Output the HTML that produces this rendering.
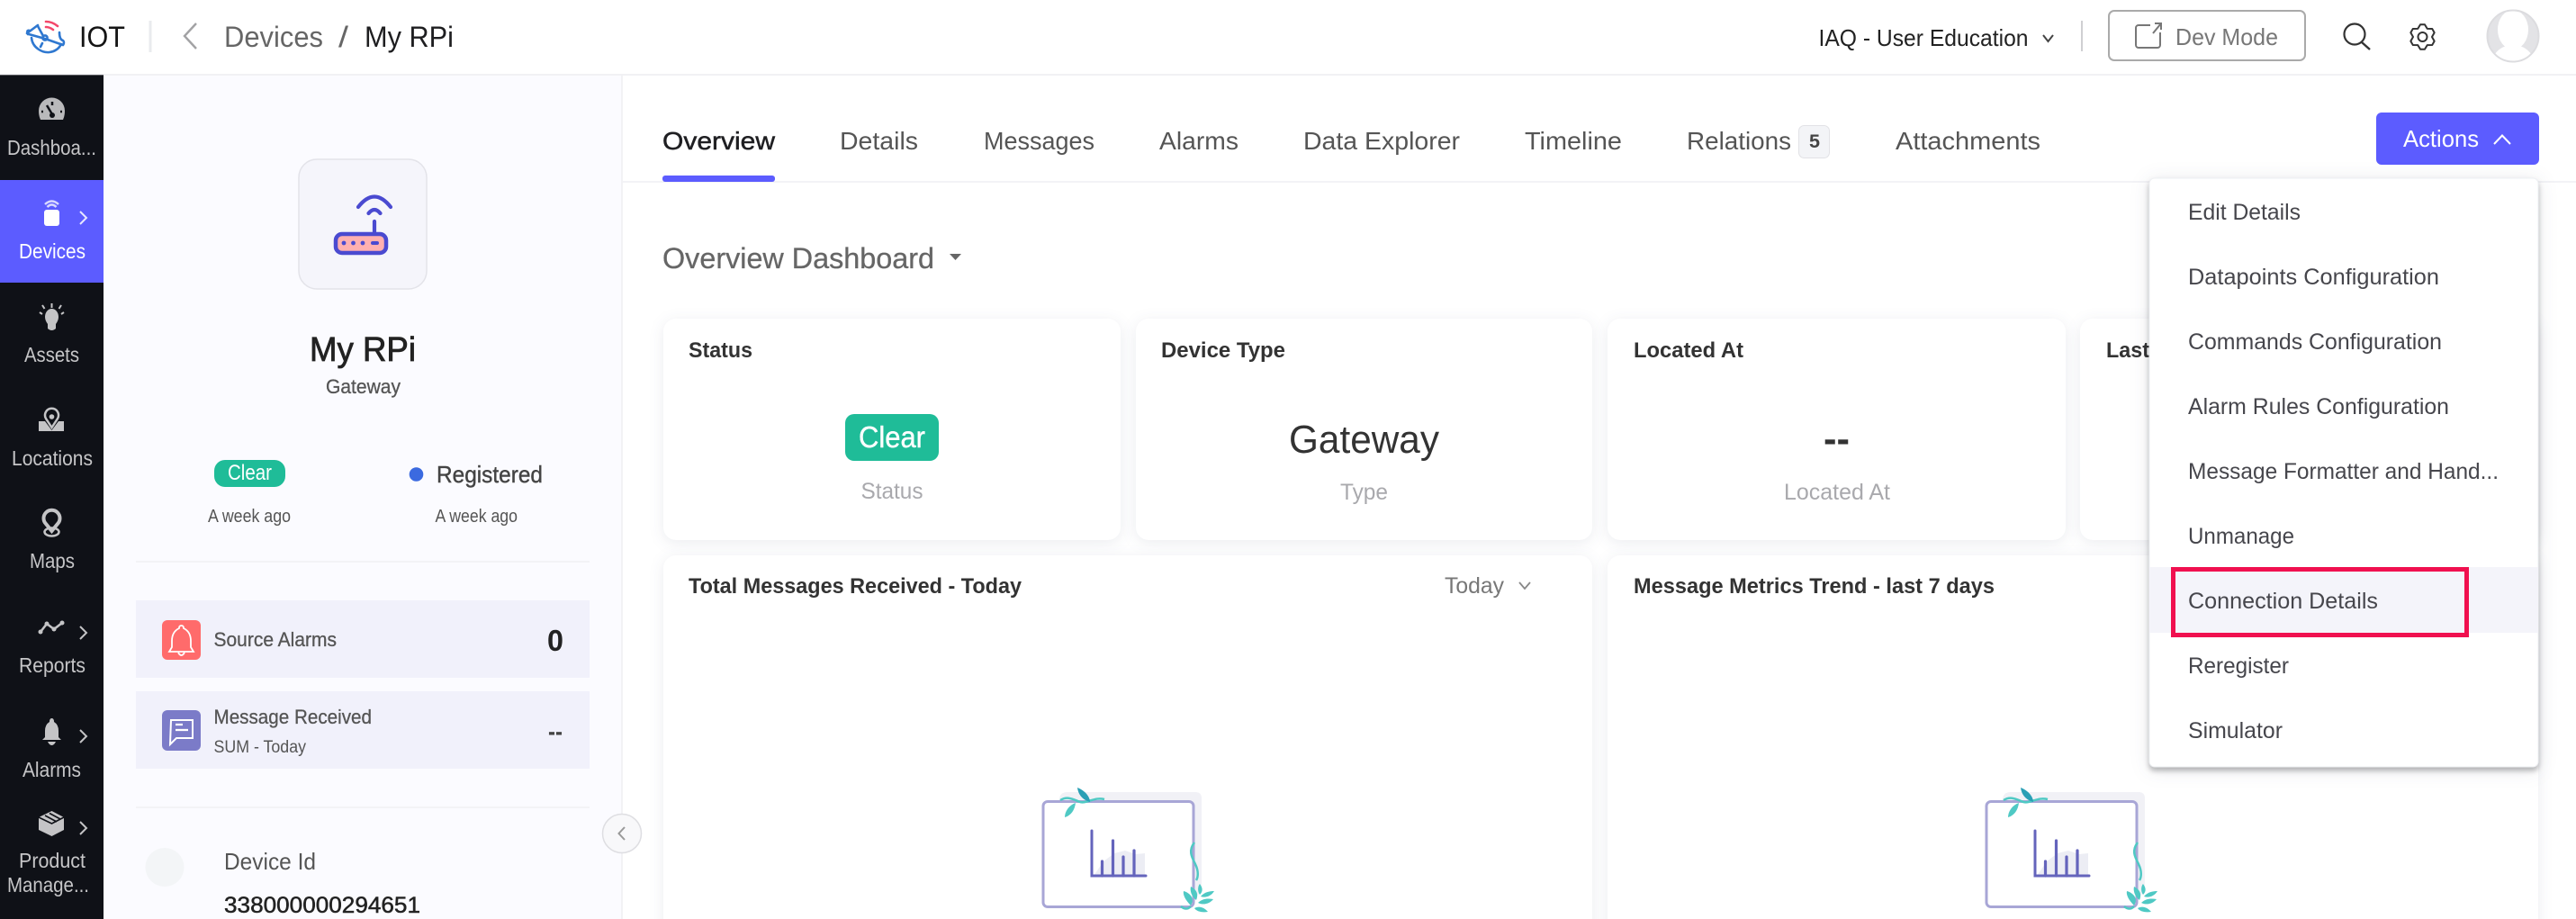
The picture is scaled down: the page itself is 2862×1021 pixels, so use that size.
<!DOCTYPE html>
<html lang="en">
<head>
<meta charset="utf-8">
<title>My RPi - Devices - IOT</title>
<style>
html,body{margin:0;padding:0;background:#fff;width:2862px;height:1021px;overflow:hidden}
svg{display:block}
text{font-family:"Liberation Sans",sans-serif;white-space:pre}
.side{font-size:23px;fill:#c6c6c8}
.tab{font-size:28px;fill:#555}
.menu{font-size:25px;fill:#46464c}
.title{font-size:24px;font-weight:700;fill:#333}
.sub{font-size:25px;fill:#a9a9ad}
.card{fill:#fff;filter:drop-shadow(0 3px 8px rgba(30,45,90,.09))}
</style>
</head>
<body>
<svg width="2862" height="1021" viewBox="0 0 2862 1021" xmlns="http://www.w3.org/2000/svg">
<rect width="2862" height="1021" fill="#fff"/>

<!-- top bar -->
<rect x="0" y="82" width="2862" height="2" fill="#f1f1f4"/>
<g fill="none" stroke="#2f78d0" stroke-width="2.6" stroke-linecap="round" stroke-linejoin="round">
<path d="M30 37 L42 28 M31 38 Q29 33 33 34"/>
<path d="M32 38 L50 43 L70 50 Q72 47 70 45 Q66 44 66 36"/>
<path d="M35 42 C36 53 47 59 55 58 C62 57 66 53 68 49"/>
<path d="M42 29 L48 40 M47 48 L45 52"/>
<circle cx="50" cy="42" r="2.6"/>
</g>
<path d="M51 24 Q58 24 64 29 M51 30 Q55 30 59 33" fill="none" stroke="#f3476a" stroke-width="2.6" stroke-linecap="round"/>
<text x="88" y="52" font-size="32" fill="#151515" textLength="51" lengthAdjust="spacingAndGlyphs">IOT</text>
<rect x="165.500" y="23" width="3" height="35" fill="#e9ebee"/>
<path d="M218 26 L205 40 L218 54" fill="none" stroke="#a2a2a4" stroke-width="2.4"/>
<text x="249" y="52" font-size="32" fill="#666" textLength="110" lengthAdjust="spacingAndGlyphs">Devices</text>
<text x="376" y="52" font-size="32" fill="#666" textLength="11" lengthAdjust="spacingAndGlyphs">/</text>
<text x="405" y="52" font-size="32" fill="#1e1e20" textLength="99" lengthAdjust="spacingAndGlyphs">My RPi</text>

<text x="2020.500" y="51" font-size="26" fill="#222" textLength="233" lengthAdjust="spacingAndGlyphs">IAQ - User Education</text>
<path d="M2270 39 L2275.500 46 L2281 39" fill="none" stroke="#444" stroke-width="2"/>
<rect x="2312" y="23" width="2" height="34" fill="#cfcfd2"/>
<rect x="2343" y="12" width="218" height="55" rx="6" fill="#fff" stroke="#aaa" stroke-width="2"/>
<path d="M2389 28 H2376 a3 3 0 0 0 -3 3 V50 a3 3 0 0 0 3 3 H2397 a3 3 0 0 0 3 -3 V36 M2392 37 L2401 26 M2394 26 H2401 V33" fill="none" stroke="#777" stroke-width="2"/>
<text x="2417" y="50" font-size="26" fill="#777" textLength="114" lengthAdjust="spacingAndGlyphs">Dev Mode</text>
<circle cx="2616" cy="38" r="11.500" fill="none" stroke="#333" stroke-width="2.200"/>
<path d="M2624 47 L2633 55" stroke="#333" stroke-width="2.400" fill="none"/>
<g transform="translate(2691.500 41)" fill="none" stroke="#333" stroke-width="2" stroke-linejoin="round">
<path d="M-2.430 -13.790 L2.430 -13.790 L5.250 -9.090 L10.720 -9 L13.160 -4.790 L10.500 0 L13.160 4.790 L10.720 9 L5.250 9.090 L2.430 13.790 L-2.430 13.790 L-5.250 9.090 L-10.720 9 L-13.160 4.790 L-10.500 0 L-13.160 -4.790 L-10.720 -9 L-5.250 -9.090 Z"/>
<circle r="5"/>
</g>
<clipPath id="av"><circle cx="2792" cy="40" r="28"/></clipPath>
<circle cx="2792" cy="40" r="28.500" fill="#e3e3e6"/>
<g clip-path="url(#av)" fill="#fff">
<ellipse cx="2792" cy="33" rx="17" ry="22"/>
<ellipse cx="2792" cy="72" rx="24" ry="22"/>
</g>
<circle cx="2792" cy="40" r="28.500" fill="none" stroke="#dcdcdf" stroke-width="2"/>

<!-- sidebar -->
<rect x="0" y="83" width="115" height="938" fill="#0f1117"/>
<rect x="0" y="83" width="115" height="1" fill="#55565a"/>
<rect x="0" y="200" width="115" height="114" fill="#5c5cff"/>

<path d="M45 133 Q43 129 43 123 A14.500 14.500 0 0 1 72 123 Q72 129 70 133 Z" fill="#b9b9bb"/>
<path d="M52 117 L58 127 M58 113 V117 M48 124 H46 M69 124 H67" stroke="#0f1117" stroke-width="2.500" fill="none"/>
<circle cx="58" cy="128" r="3" fill="#0f1117"/>
<text class="side" x="8" y="172" textLength="99" lengthAdjust="spacingAndGlyphs">Dashboa...</text>

<path d="M50 227 Q57.500 220 65 227 M52.500 230 Q57.500 225 62.500 230" fill="none" stroke="#d8d8ff" stroke-width="2.500"/>
<rect x="49" y="233" width="17" height="18" rx="3" fill="#fff"/>
<path d="M89 235 L96 242 L89 249" fill="none" stroke="#fff" stroke-width="2" opacity=".85"/>
<text class="side" style="fill:#fff" x="21" y="287" textLength="74" lengthAdjust="spacingAndGlyphs">Devices</text>

<path d="M50 352 A7.500 9 0 0 1 65 352 Q65 356 62 360 V365 Q57.500 369 53 365 V360 Q50 356 50 352 Z" fill="#c4c4c6"/>
<path d="M57.500 337 V342 M47 339 L49.500 343 M68 339 L65.500 343 M44 347 L47 349 M71 347 L68 349" stroke="#c4c4c6" stroke-width="2" fill="none"/>
<text class="side" x="27" y="402" textLength="61" lengthAdjust="spacingAndGlyphs">Assets</text>

<path d="M43 468 H50 L57.500 478 L65 468 H71 V479 H43 Z" fill="#c4c4c6"/>
<path d="M57.500 475 L51 465 A7.500 7.500 0 1 1 64 465 Z" fill="#0f1117" stroke="#c4c4c6" stroke-width="2.500"/>
<circle cx="57.500" cy="463" r="2.800" fill="#c4c4c6"/>
<text class="side" x="13" y="517" textLength="90" lengthAdjust="spacingAndGlyphs">Locations</text>

<path d="M57.500 590 L51 582 A9 9 0 1 1 64 582 Z" fill="none" stroke="#c4c4c6" stroke-width="4"/>
<ellipse cx="57.500" cy="591" rx="8" ry="4.500" fill="none" stroke="#c4c4c6" stroke-width="2.500"/>
<text class="side" x="33" y="631" textLength="50" lengthAdjust="spacingAndGlyphs">Maps</text>

<path d="M45 702 L52 693 L60 699 L69 692" fill="none" stroke="#c4c4c6" stroke-width="2.600"/>
<g fill="#c4c4c6"><circle cx="45" cy="702" r="2.500"/><circle cx="52" cy="693" r="2.500"/><circle cx="60" cy="699" r="2.500"/><circle cx="69" cy="692" r="2.500"/></g>
<path d="M89 696 L96 703 L89 710" fill="none" stroke="#c4c4c6" stroke-width="2"/>
<text class="side" x="21" y="747" textLength="74" lengthAdjust="spacingAndGlyphs">Reports</text>

<path d="M57.500 798 Q60 798 60 802 Q65 805 65 812 V819 L68 822 H47 L50 819 V812 Q50 805 55 802 Q55 798 57.500 798 Z M53 824 H62 Q60 828 57.500 828 Q55 828 53 824 Z" fill="#c4c4c6"/>
<path d="M89 811 L96 818 L89 825" fill="none" stroke="#c4c4c6" stroke-width="2"/>
<text class="side" x="25" y="863" textLength="65" lengthAdjust="spacingAndGlyphs">Alarms</text>

<path d="M57.500 901 L71 908 V922 L57.500 929 L43 922 V908 Z" fill="#c4c4c6"/>
<path d="M50 906 L63 913 M55 903.500 L67 910 M43 908 L57.500 915 L71 908" fill="none" stroke="#0f1117" stroke-width="1.600"/>
<path d="M89 913 L96 920 L89 927" fill="none" stroke="#c4c4c6" stroke-width="2"/>
<text class="side" x="21" y="964" textLength="74" lengthAdjust="spacingAndGlyphs">Product</text>
<text class="side" x="8" y="991" textLength="91" lengthAdjust="spacingAndGlyphs">Manage...</text>

<!-- left panel -->
<rect x="115" y="84" width="575" height="937" fill="#fbfbff"/>
<rect x="690" y="84" width="2" height="937" fill="#f2f2f5"/>
<rect x="332" y="177" width="142" height="144" rx="20" fill="#f5f5fb" stroke="#e3e3e9" stroke-width="1.500"/>
<path d="M398 230 Q416 207 434 230 M409.500 237 Q416 229 422.500 237 M416 246 V258" fill="none" stroke="#4a4ad0" stroke-width="4.200" stroke-linecap="round"/>
<rect x="373" y="260" width="56" height="21" rx="7" fill="#ffb0b0" stroke="#4a4ad0" stroke-width="4.500"/>
<g fill="#4a4ad0"><circle cx="382" cy="270" r="2.400"/><circle cx="392.500" cy="270" r="2.400"/><circle cx="403" cy="270" r="2.400"/><rect x="412" y="268" width="9" height="4" rx="2"/></g>

<text x="344" y="401" font-size="38" fill="#222" stroke="#222" stroke-width=".8" textLength="118" lengthAdjust="spacingAndGlyphs">My RPi</text>
<text x="362" y="437" font-size="22" fill="#555" stroke="#555" stroke-width=".3" textLength="83" lengthAdjust="spacingAndGlyphs">Gateway</text>
<rect x="238" y="511" width="79" height="30" rx="12" fill="#1fbc98"/>
<text x="253" y="533" font-size="24" fill="#fff" textLength="49" lengthAdjust="spacingAndGlyphs">Clear</text>
<circle cx="462.500" cy="527" r="7.800" fill="#3b6ae0"/>
<text x="485" y="536" font-size="26" fill="#444" stroke="#444" stroke-width=".4" textLength="118" lengthAdjust="spacingAndGlyphs">Registered</text>
<text x="231" y="580" font-size="20" fill="#555" textLength="92" lengthAdjust="spacingAndGlyphs">A week ago</text>
<text x="483.500" y="580" font-size="20" fill="#555" textLength="91.500" lengthAdjust="spacingAndGlyphs">A week ago</text>
<rect x="151" y="623" width="504" height="2" fill="#f3f3f6"/>

<rect x="151" y="667" width="504" height="86" fill="#f1f1fb"/>
<rect x="180" y="689" width="43" height="44" rx="6" fill="#ff6b6b"/>
<path d="M201.500 695 Q204 695 204 698 Q212 702 212 712 V719 L215 724 H188 L191 719 V712 Q191 702 199 698 Q199 695 201.500 695 Z M198 725 Q201.500 731 205 725" fill="none" stroke="#fff" stroke-width="1.800"/>
<text x="237.500" y="718" font-size="22" fill="#555" stroke="#555" stroke-width=".3" textLength="136.500" lengthAdjust="spacingAndGlyphs">Source Alarms</text>
<text x="608" y="723" font-size="33" font-weight="700" fill="#222" textLength="18" lengthAdjust="spacingAndGlyphs">0</text>

<rect x="151" y="768" width="504" height="86" fill="#f1f1fb"/>
<rect x="180" y="789" width="43" height="45" rx="6" fill="#7b7bc8"/>
<path d="M190 800 H214 V820 H196 L189 827 Z" fill="none" stroke="#fff" stroke-width="2"/>
<path d="M195 805 H203 M195 811 H209" stroke="#fff" stroke-width="2.200" fill="none"/>
<text x="237.500" y="804" font-size="22" fill="#555" stroke="#555" stroke-width=".3" textLength="175.500" lengthAdjust="spacingAndGlyphs">Message Received</text>
<text x="237.500" y="836" font-size="19" fill="#555" textLength="102.500" lengthAdjust="spacingAndGlyphs">SUM - Today</text>
<text x="609" y="822" font-size="28" font-weight="700" fill="#444" textLength="16" lengthAdjust="spacingAndGlyphs">--</text>
<rect x="151" y="896" width="504" height="2" fill="#f3f3f6"/>

<circle cx="183" cy="963.500" r="21.500" fill="#f3f5f7"/>
<text x="249" y="966" font-size="26" fill="#555" textLength="102" lengthAdjust="spacingAndGlyphs">Device Id</text>
<text x="249" y="1014" font-size="25" fill="#222" stroke="#222" stroke-width=".5" textLength="218" lengthAdjust="spacingAndGlyphs">338000000294651</text>

<!-- tabs -->
<rect x="692" y="201" width="2170" height="2" fill="#f3f3f6"/>
<text x="736" y="166" font-size="28" fill="#1f1f22" stroke="#1f1f22" stroke-width=".5" textLength="125" lengthAdjust="spacingAndGlyphs">Overview</text>
<rect x="736" y="195" width="125" height="7" rx="3" fill="#5c5cff"/>
<text class="tab" x="933" y="166" textLength="87" lengthAdjust="spacingAndGlyphs">Details</text>
<text class="tab" x="1093" y="166" textLength="123" lengthAdjust="spacingAndGlyphs">Messages</text>
<text class="tab" x="1288" y="166" textLength="88" lengthAdjust="spacingAndGlyphs">Alarms</text>
<text class="tab" x="1448" y="166" textLength="174" lengthAdjust="spacingAndGlyphs">Data Explorer</text>
<text class="tab" x="1694" y="166" textLength="108" lengthAdjust="spacingAndGlyphs">Timeline</text>
<text class="tab" x="1874" y="166" textLength="116" lengthAdjust="spacingAndGlyphs">Relations</text>
<rect x="1998.500" y="139.500" width="34" height="36" rx="6" fill="#f3f4f7" stroke="#e2e2e6"/>
<text x="2010" y="164" font-size="21" font-weight="700" fill="#444" textLength="12" lengthAdjust="spacingAndGlyphs">5</text>
<text class="tab" x="2106" y="166" textLength="161" lengthAdjust="spacingAndGlyphs">Attachments</text>
<rect x="2640" y="125" width="181" height="58" rx="6" fill="#5c5cff"/>
<text x="2670" y="163" font-size="26" fill="#fff" textLength="84" lengthAdjust="spacingAndGlyphs">Actions</text>
<path d="M2771 160 L2780 150.500 L2789 160" fill="none" stroke="#fff" stroke-width="2"/>

<text x="736" y="298" font-size="32" fill="#666" stroke="#666" stroke-width=".3" textLength="302" lengthAdjust="spacingAndGlyphs">Overview Dashboard</text>
<path d="M1055 282 H1068 L1061.500 289 Z" fill="#666"/>

<!-- cards -->
<rect class="card" x="737" y="354" width="508" height="246" rx="14"/>
<rect class="card" x="1262" y="354" width="507" height="246" rx="14"/>
<rect class="card" x="1786" y="354" width="509" height="246" rx="14"/>
<rect class="card" x="2311" y="354" width="509" height="246" rx="14"/>
<rect class="card" x="737" y="617" width="1032" height="430" rx="14"/>
<rect class="card" x="1786" y="617" width="1034" height="430" rx="14"/>

<text class="title" x="765" y="397" textLength="71" lengthAdjust="spacingAndGlyphs">Status</text>
<rect x="939" y="460" width="104" height="52" rx="10" fill="#1fbc98"/>
<text x="954" y="497" font-size="33" fill="#fff" stroke="#fff" stroke-width=".4" textLength="74" lengthAdjust="spacingAndGlyphs">Clear</text>
<text class="sub" x="956.500" y="554" textLength="69" lengthAdjust="spacingAndGlyphs">Status</text>

<text class="title" x="1290" y="397" textLength="138" lengthAdjust="spacingAndGlyphs">Device Type</text>
<text x="1432" y="503" font-size="44" fill="#333" textLength="167" lengthAdjust="spacingAndGlyphs">Gateway</text>
<text class="sub" x="1489" y="555" textLength="53" lengthAdjust="spacingAndGlyphs">Type</text>

<text class="title" x="1815" y="397" textLength="122" lengthAdjust="spacingAndGlyphs">Located At</text>
<text x="2026" y="502" font-size="44" font-weight="700" fill="#333" textLength="29" lengthAdjust="spacingAndGlyphs">--</text>
<text class="sub" x="1982" y="555" textLength="118" lengthAdjust="spacingAndGlyphs">Located At</text>

<text class="title" x="2340" y="397" textLength="48" lengthAdjust="spacingAndGlyphs">Last</text>

<text class="title" x="765" y="659" textLength="370" lengthAdjust="spacingAndGlyphs">Total Messages Received - Today</text>
<text x="1605" y="659" font-size="25" fill="#777" textLength="66" lengthAdjust="spacingAndGlyphs">Today</text>
<path d="M1688 647 L1694 654 L1700 647" fill="none" stroke="#888" stroke-width="1.800"/>
<text class="title" x="1815" y="659" textLength="401" lengthAdjust="spacingAndGlyphs">Message Metrics Trend - last 7 days</text>

<!-- illustrations -->
<g id="ill">
<path d="M1177 889 Q1177 880 1186 880 H1328 Q1335 880 1335 887 V990 L1320 1005 H1177 Z" fill="#f1f1f6"/>
<rect x="1159" y="890.500" width="167" height="117" rx="5" fill="#fff" stroke="#a8a6d6" stroke-width="3"/>
<path d="M1215 973 L1226 957 L1238 948 L1250 945 L1262 949 L1272 948 V973 Z" fill="#ecedf4"/>
<g fill="none" stroke="#6464bc" stroke-linecap="round">
<path d="M1213 923 V973 H1273" stroke-width="3"/>
<path d="M1224.500 957 V973 M1236.500 934 V973 M1248 952 V973 M1260 945 V973" stroke-width="3.200"/>
</g>
<path d="M1178 889 C1186 884 1192 888 1200 891 C1208 893 1216 885 1227 888" fill="none" stroke="#4fc9c4" stroke-width="2.500"/>
<path d="M1197 875 C1205 878 1211 885 1211 891 C1204 889 1198 884 1197 875 Z" fill="#2a9fb5"/>
<path d="M1195 892 C1194 900 1190 906 1183 908 C1183 902 1187 895 1195 892 Z" fill="#4fc9c4"/>
<path d="M1327 936 C1320 945 1324 952 1328 960 C1332 968 1331 975 1329 978" fill="none" stroke="#4fc9c4" stroke-width="2.500"/>
<g fill="#4fc9c4">
<path d="M1323 1006 C1317 1000 1314 994 1315 990 C1322 992 1328 998 1323 1006 Z"/>
<path d="M1329 1000 C1323 995 1322 989 1323 985 C1329 988 1332 993 1329 1000 Z"/>
<path d="M1333 994 C1330 990 1331 984 1333 982 C1336 986 1337 990 1333 994 Z"/>
<path d="M1334 996 C1338 991 1344 990 1349 990 C1346 995 1340 998 1334 996 Z"/>
<path d="M1331 1003 C1336 998 1342 998 1348 999 C1344 1004 1337 1006 1331 1003 Z"/>
<path d="M1327 1009 C1332 1006 1338 1008 1342 1013 C1336 1014 1330 1013 1327 1009 Z"/>
<path d="M1312 1007 Q1318 1012 1323 1007" fill="none" stroke="#4fc9c4" stroke-width="2.500"/>
</g>
</g>
<use href="#ill" x="1048"/>

<!-- collapse -->
<circle cx="691" cy="926" r="21.500" fill="#f8f8fa" stroke="#dedee2" stroke-width="1.500"/>
<path d="M694 919 L687.500 926 L694 933" fill="none" stroke="#999" stroke-width="2"/>

<!-- dropdown -->
<rect x="2388" y="198" width="432" height="654" rx="6" fill="#fff" stroke="#eef0f3" style="filter:drop-shadow(0 4px 3px rgba(0,0,0,.26)) drop-shadow(0 2px 10px rgba(30,40,70,.10))"/>
<rect x="2388" y="630" width="432" height="73" fill="#f4f4fa"/>
<text class="menu" x="2431" y="244" textLength="125" lengthAdjust="spacingAndGlyphs">Edit Details</text>
<text class="menu" x="2431" y="316" textLength="279" lengthAdjust="spacingAndGlyphs">Datapoints Configuration</text>
<text class="menu" x="2431" y="388" textLength="282" lengthAdjust="spacingAndGlyphs">Commands Configuration</text>
<text class="menu" x="2431" y="460" textLength="290" lengthAdjust="spacingAndGlyphs">Alarm Rules Configuration</text>
<text class="menu" x="2431" y="532" textLength="345" lengthAdjust="spacingAndGlyphs">Message Formatter and Hand...</text>
<text class="menu" x="2431" y="604" textLength="118" lengthAdjust="spacingAndGlyphs">Unmanage</text>
<text class="menu" x="2431" y="676" textLength="211" lengthAdjust="spacingAndGlyphs">Connection Details</text>
<text class="menu" x="2431" y="748" textLength="112" lengthAdjust="spacingAndGlyphs">Reregister</text>
<text class="menu" x="2431" y="820" textLength="105" lengthAdjust="spacingAndGlyphs">Simulator</text>
<rect x="2414.500" y="632.500" width="326" height="73" fill="none" stroke="#f0104f" stroke-width="5"/>
</svg>
</body>
</html>
